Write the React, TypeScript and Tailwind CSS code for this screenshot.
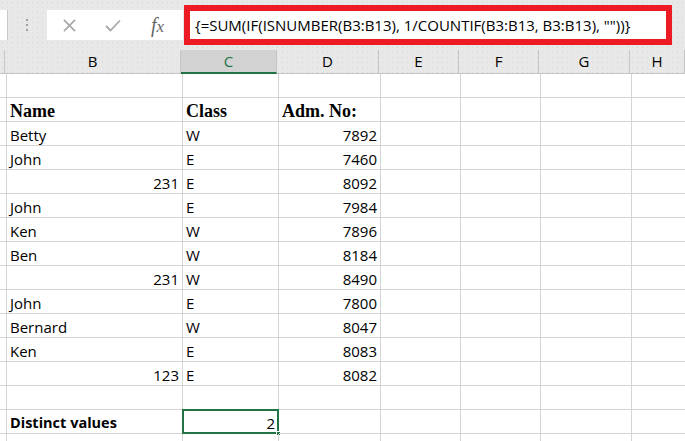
import type { ReactNode } from 'react';

const colWidths = ['w-[5px]', 'w-[176px]', 'w-[96px]', 'w-[102px]', 'w-[80px]', 'w-[80px]', 'w-[91px]', 'w-[55px]'];
const colLetters = ['', 'B', 'C', 'D', 'E', 'F', 'G', 'H'];

type Row = { b?: string; c?: string; d?: string; bNum?: boolean; kind?: 'head' | 'total' };

const rows: Row[] = [
  {},
  { b: 'Name', c: 'Class', d: 'Adm. No:', kind: 'head' },
  { b: 'Betty', c: 'W', d: '7892' },
  { b: 'John', c: 'E', d: '7460' },
  { b: '231', c: 'E', d: '8092', bNum: true },
  { b: 'John', c: 'E', d: '7984' },
  { b: 'Ken', c: 'W', d: '7896' },
  { b: 'Ben', c: 'W', d: '8184' },
  { b: '231', c: 'W', d: '8490', bNum: true },
  { b: 'John', c: 'E', d: '7800' },
  { b: 'Bernard', c: 'W', d: '8047' },
  { b: 'Ken', c: 'E', d: '8083' },
  { b: '123', c: 'E', d: '8082', bNum: true },
  {},
  { b: 'Distinct values', kind: 'total' },
  {},
];

function Cell({ w, right, children, className = '' }: { w: string; right?: boolean; children?: ReactNode; className?: string }) {
  return (
    <div
      className={`${w} relative flex h-full shrink-0 items-end border-r border-b border-[#d4d4d4] px-[3px] pb-0 ${
        right ? 'justify-end' : 'justify-start'
      } ${className}`}
    >
      {children}
    </div>
  );
}

function Toolbar() {
  return (
    <div className="flex h-[50px] items-center bg-[#e8e8e8] bg-[radial-gradient(#d6d6d6_0.6px,transparent_0.8px)] bg-[length:5px_5px]">
      <div className="h-[30px] w-[8px] shrink-0 bg-white border-r border-[#c8c8c8]" />
      <div className="ml-[18px] flex w-[21px] shrink-0 flex-col items-start gap-[3px]">
        <span className="h-[2px] w-[2px] bg-[#a0a0a0]" />
        <span className="h-[2px] w-[2px] bg-[#a0a0a0]" />
        <span className="h-[2px] w-[2px] bg-[#a0a0a0]" />
      </div>
      <div className="flex h-[30px] w-[136px] shrink-0 items-center bg-white">
        <svg className="ml-[16px]" width="13" height="13" viewBox="0 0 14 14">
          <path d="M1 1 L13 13 M13 1 L1 13" stroke="#a8a8a8" strokeWidth="1.8" fill="none" />
        </svg>
        <svg className="ml-[29px]" width="16" height="13" viewBox="0 0 16 13">
          <path d="M1 7 L5.5 11.5 L15 1.5" stroke="#a8a8a8" strokeWidth="1.8" fill="none" />
        </svg>
        <span className="ml-[30px] font-['Liberation_Serif',serif] text-[20px] italic text-[#666666] leading-none">
          f<span className="text-[17px]">x</span>
        </span>
      </div>
      <div className="ml-[1px] flex h-[40px] w-[488px] shrink-0 items-center border-[6px] border-[#ed1c24] bg-white pl-[5px]">
        <span className="whitespace-nowrap text-[15px] leading-none text-black">
          {'{=SUM(IF(ISNUMBER(B3:B13), 1/COUNTIF(B3:B13, B3:B13), ""))}'}
        </span>
      </div>
    </div>
  );
}

function ColumnHeaders() {
  return (
    <div className="flex h-[24px] bg-[#e8e8e8] bg-[radial-gradient(#d6d6d6_0.6px,transparent_0.8px)] bg-[length:5px_5px]">
      {colLetters.map((letter, i) =>
        letter === 'C' ? (
          <div
            key={i}
            className={`${colWidths[i]} flex shrink-0 items-center justify-center border-r border-b-2 border-r-[#c6c6c6] border-b-[#217346] bg-[#d2d2d2] text-[15px] text-[#217346]`}
          >
            {letter}
          </div>
        ) : (
          <div
            key={i}
            className={`${colWidths[i]} flex shrink-0 items-center justify-center border-r border-b border-[#c6c6c6] text-[15px] text-black`}
          >
            {letter}
          </div>
        )
      )}
    </div>
  );
}

export default function App() {
  return (
    <div className="h-[441px] w-[685px] overflow-hidden bg-white font-['Open_Sans',sans-serif]">
      <Toolbar />
      <ColumnHeaders />
      {rows.map((row, r) => {
        const head = row.kind === 'head';
        const total = row.kind === 'total';
        const textCls = head
          ? "font-['Liberation_Serif',serif] text-[18px] font-bold leading-[20px]"
          : 'text-[15px] leading-[20px]';
        return (
          <div key={r} className="flex h-[24px] text-black">
            <Cell w={colWidths[0]} className="px-0" />
            <Cell w={colWidths[1]} right={row.bNum}>
              <span className={total ? 'text-[14.5px] font-bold leading-[20px]' : textCls}>{row.b}</span>
            </Cell>
            {total ? (
              <Cell w={colWidths[2]} right className="border-[#d4d4d4]">
                <div className="absolute -left-[1px] -top-[1px] bottom-[-1px] right-[-1px] border-2 border-[#217346]" />
                <span className="text-[15px] leading-[20px]">2</span>
                <div className="absolute -bottom-[3px] -right-[3px] h-[5px] w-[5px] border border-white bg-[#217346]" />
              </Cell>
            ) : (
              <Cell w={colWidths[2]}>
                <span className={textCls}>{row.c}</span>
              </Cell>
            )}
            <Cell w={colWidths[3]} right={!head}>
              <span className={textCls}>{row.d}</span>
            </Cell>
            <Cell w={colWidths[4]} />
            <Cell w={colWidths[5]} />
            <Cell w={colWidths[6]} />
            <Cell w={colWidths[7]} />
          </div>
        );
      })}
    </div>
  );
}
